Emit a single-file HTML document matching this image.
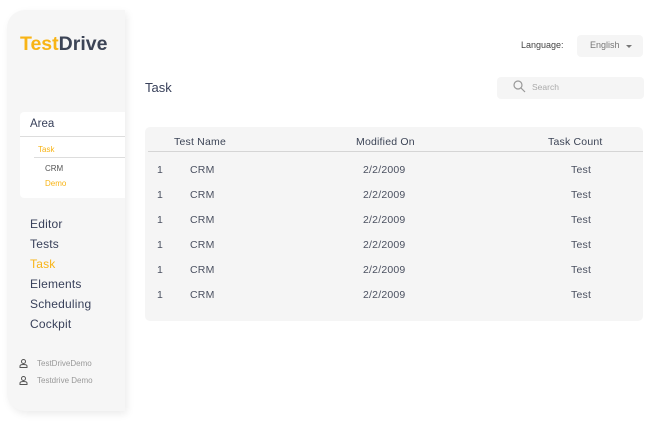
<!DOCTYPE html>
<html><head><meta charset="utf-8"><style>
*{margin:0;padding:0;box-sizing:border-box}
body{width:659px;height:422px;background:#fff;font-family:"Liberation Sans",sans-serif;color:#3c4456;position:relative;overflow:hidden}
.a{position:absolute;white-space:nowrap}
.side{position:absolute;left:7px;top:10px;width:118px;height:401px;background:#f6f6f6;border-radius:18px 0 0 18px;box-shadow:2px 3px 8px rgba(0,0,0,0.08)}
.area{position:absolute;left:20px;top:112px;width:105px;height:86px;background:#fff;border-radius:4px 0 0 4px}
.nav{font-size:12px;color:#38405a;letter-spacing:0.2px}
.card{position:absolute;left:145px;top:127px;width:498px;height:194px;background:#f5f5f5;border-radius:5px}
.row{font-size:10.5px;color:#4a5060;letter-spacing:0.2px}
</style></head><body>
<div class="side"></div>
<div class="a" style="left:20px;top:33px;font-size:19.5px;font-weight:bold;"><span style="color:#f8b416">Test</span><span style="color:#3c4456">Drive</span></div>
<div class="area"></div>
<div class="a" style="left:30px;top:118px;font-size:11.5px;color:#38405a">Area</div>
<div class="a" style="left:20px;top:136px;width:105px;height:1px;background:#ddd"></div>
<div class="a" style="left:38px;top:145px;font-size:8px;color:#f8b416">Task</div>
<div class="a" style="left:34px;top:157px;width:91px;height:1px;background:#ddd"></div>
<div class="a" style="left:45px;top:164px;font-size:8px;color:#555">CRM</div>
<div class="a" style="left:45px;top:179px;font-size:8px;color:#f8b416">Demo</div>
<div class="a nav" style="left:30px;top:217px">Editor</div>
<div class="a nav" style="left:30px;top:237px">Tests</div>
<div class="a nav" style="left:30px;top:257px;color:#f8b416">Task</div>
<div class="a nav" style="left:30px;top:277px">Elements</div>
<div class="a nav" style="left:30px;top:297px">Scheduling</div>
<div class="a nav" style="left:30px;top:317px">Cockpit</div>
<svg class="a" style="left:19px;top:359px" width="9" height="9" viewBox="0 0 9 9" fill="none" stroke="#555" stroke-width="1"><circle cx="4.5" cy="2.5" r="2"/><path d="M1 8.5h7V7c0-1-1-1.5-3.5-1.5S1 6 1 7z"/></svg>
<div class="a" style="left:37px;top:359px;font-size:8px;color:#999">TestDriveDemo</div>
<svg class="a" style="left:19px;top:376px" width="9" height="9" viewBox="0 0 9 9" fill="none" stroke="#555" stroke-width="1"><circle cx="4.5" cy="2.5" r="2"/><path d="M1 8.5h7V7c0-1-1-1.5-3.5-1.5S1 6 1 7z"/></svg>
<div class="a" style="left:37px;top:376px;font-size:8px;color:#999">Testdrive Demo</div>

<div class="a" style="left:521px;top:40px;font-size:9px;color:#444">Language:</div>
<div class="a" style="left:577px;top:35px;width:66px;height:22px;background:#f5f5f5;border-radius:4px"></div>
<div class="a" style="left:590px;top:40px;font-size:9px;color:#777">English</div>
<div class="a" style="left:626px;top:45px;width:0;height:0;border-left:3px solid transparent;border-right:3px solid transparent;border-top:3px solid #777"></div>
<div class="a" style="left:145px;top:80px;font-size:13px;color:#38405a">Task</div>
<div class="a" style="left:497px;top:77px;width:147px;height:22px;background:#f5f5f5;border-radius:4px"></div>
<svg class="a" style="left:513px;top:80px" width="13" height="13" viewBox="0 0 13 13" fill="none" stroke="#999" stroke-width="1.2"><circle cx="5" cy="5" r="4"/><path d="M8 8l4 4"/></svg>
<div class="a" style="left:532px;top:82px;font-size:8.5px;color:#aaa">Search</div>

<div class="card"></div>
<div class="a" style="left:148px;top:151px;width:495px;height:1px;background:#d5d5d5"></div>
<div class="a row" style="left:174px;top:136px;color:#3c4456">Test Name</div>
<div class="a row" style="left:356px;top:136px;color:#3c4456">Modified On</div>
<div class="a row" style="left:548px;top:136px;color:#3c4456">Task Count</div>
<div class="a row" style="left:157px;top:164px">1</div><div class="a row" style="left:190px;top:164px">CRM</div><div class="a row" style="left:363px;top:164px">2/2/2009</div><div class="a row" style="left:571px;top:164px">Test</div>
<div class="a row" style="left:157px;top:189px">1</div><div class="a row" style="left:190px;top:189px">CRM</div><div class="a row" style="left:363px;top:189px">2/2/2009</div><div class="a row" style="left:571px;top:189px">Test</div>
<div class="a row" style="left:157px;top:214px">1</div><div class="a row" style="left:190px;top:214px">CRM</div><div class="a row" style="left:363px;top:214px">2/2/2009</div><div class="a row" style="left:571px;top:214px">Test</div>
<div class="a row" style="left:157px;top:239px">1</div><div class="a row" style="left:190px;top:239px">CRM</div><div class="a row" style="left:363px;top:239px">2/2/2009</div><div class="a row" style="left:571px;top:239px">Test</div>
<div class="a row" style="left:157px;top:264px">1</div><div class="a row" style="left:190px;top:264px">CRM</div><div class="a row" style="left:363px;top:264px">2/2/2009</div><div class="a row" style="left:571px;top:264px">Test</div>
<div class="a row" style="left:157px;top:289px">1</div><div class="a row" style="left:190px;top:289px">CRM</div><div class="a row" style="left:363px;top:289px">2/2/2009</div><div class="a row" style="left:571px;top:289px">Test</div>
</body></html>
